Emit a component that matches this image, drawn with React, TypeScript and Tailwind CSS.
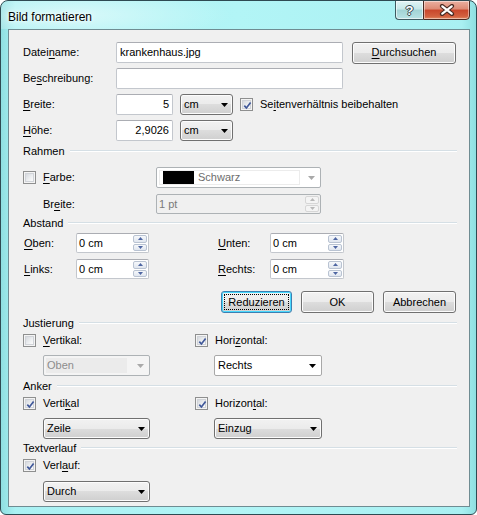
// "Bild formatieren" — Windows 7 style picture format dialog.

import React from 'react'

const sans = "font-['Liberation_Sans',Arial,sans-serif]"

// label with one underlined accelerator letter
function Acc({ t, u }: { t: string; u: number }) {
  return (
    <span className="whitespace-nowrap">
      {t.slice(0, u)}
      <span className="underline underline-offset-[2px] decoration-[1px]">{t[u]}</span>
      {t.slice(u + 1)}
    </span>
  )
}

function Arrow({ color = '#000' }: { color?: string }) {
  return (
    <svg width="7" height="4" viewBox="0 0 7 4" className="shrink-0">
      <path d="M0 0H7L3.5 4Z" fill={color} />
    </svg>
  )
}

function Check({ on }: { on?: boolean }) {
  return (
    <div className="w-[13px] h-[13px] shrink-0 border border-[#8e8f8f] bg-[#f4f4f4] p-[1px]">
      <div className="w-full h-full relative border border-[#d0d3d8] bg-[linear-gradient(135deg,#d6d9de_0%,#eef0f2_60%,#fbfbfb_100%)]">
        {on && (
          <svg width="9" height="9" viewBox="0 0 9 9" className="absolute left-[0px] top-[0px]">
            <path d="M1.3 4.6 L3.4 7 L7.6 1.4" stroke="#41599a" strokeWidth="1.7" fill="none" />
          </svg>
        )}
      </div>
    </div>
  )
}

function TextBox({ w, value = '', right }: { w: number; value?: string; right?: boolean }) {
  return (
    <div
      style={{ width: w }}
      className={
        'h-[21px] shrink-0 rounded-[2px] border border-[#c3c7cd] border-t-[#abadb3] bg-white flex items-center px-[3px] ' +
        (right ? 'justify-end' : '')
      }
    >
      {value}
    </div>
  )
}

function Btn({ w, children, focus }: { w: number; children: React.ReactNode; focus?: boolean }) {
  return (
    <div
      style={{ width: w }}
      className={
        'h-[22px] shrink-0 rounded-[3px] border p-[2px] bg-[linear-gradient(#f2f2f2_0%,#ebebeb_50%,#dddddd_50%,#cfcfcf_100%)] ' +
        (focus
          ? 'border-[#3c7fb1] shadow-[inset_0_0_0_1px_#48d8fd]'
          : 'border-[#707070] shadow-[inset_0_0_0_1px_#fcfcfc]')
      }
    >
      <div
        className={
          'w-full h-full flex items-center justify-center ' +
          (focus ? 'outline-1 outline-dotted outline-black -outline-offset-1' : '')
        }
      >
        {children}
      </div>
    </div>
  )
}

function DropBtn({ w, value }: { w: number; value: string }) {
  return (
    <div
      style={{ width: w }}
      className="h-[21px] shrink-0 rounded-[3px] border border-[#707070] shadow-[inset_0_0_0_1px_#fcfcfc] bg-[linear-gradient(#f2f2f2_0%,#ebebeb_50%,#dddddd_50%,#cfcfcf_100%)] flex items-center pl-[3px] pr-[4px]"
    >
      <span className="flex-1">{value}</span>
      <Arrow />
    </div>
  )
}

function DropWhite({ w, value }: { w: number; value: string }) {
  return (
    <div
      style={{ width: w }}
      className="h-[21px] shrink-0 rounded-[2px] border border-[#a8a8a8] bg-white flex items-center pl-[3px] pr-[5px]"
    >
      <span className="flex-1">{value}</span>
      <Arrow />
    </div>
  )
}

function DropOff({ w, value }: { w: number; value: string }) {
  return (
    <div
      style={{ width: w }}
      className="h-[21px] shrink-0 rounded-[2px] border border-[#adb2b5] bg-[#f4f4f4] flex items-center p-[2px] pr-[5px] text-[#8d8d8d]"
    >
      <span className="flex-1 h-full bg-[#ebebeb] flex items-center pl-[1px] mr-[10px]">{value}</span>
      <Arrow color="#a9a9a9" />
    </div>
  )
}

function SpinBtns({ off }: { off?: boolean }) {
  const c = off ? '#b8b8b8' : '#4e66a2'
  const box = off
    ? 'border-[#d6d6d6] bg-[#f4f4f4]'
    : 'border-[#b9c3d2] bg-[linear-gradient(#f6f8fb,#e0e6ef)]'
  return (
    <div className="w-[15px] h-full flex flex-col gap-[1px] py-[1px] pr-[1px] shrink-0">
      <div className={'flex-1 rounded-[2px] border flex items-center justify-center ' + box}>
        <svg width="5" height="3" viewBox="0 0 5 3">
          <path d="M0 3H5L2.5 0Z" fill={c} />
        </svg>
      </div>
      <div className={'flex-1 rounded-[2px] border flex items-center justify-center ' + box}>
        <svg width="5" height="3" viewBox="0 0 5 3">
          <path d="M0 0H5L2.5 3Z" fill={c} />
        </svg>
      </div>
    </div>
  )
}

function Spinner({ w, value, off }: { w: number; value: string; off?: boolean }) {
  return (
    <div
      style={{ width: w }}
      className={
        'h-[20px] shrink-0 rounded-[2px] border flex items-stretch ' +
        (off ? 'border-[#adb2b5] bg-[#f0f0f0] text-[#7a7a7a]' : 'border-[#c3c7cd] border-t-[#abadb3] bg-white')
      }
    >
      <span className="flex-1 flex items-center pl-[2px]">{value}</span>
      <SpinBtns off={off} />
    </div>
  )
}

function Section({ title, mt }: { title: string; mt: number }) {
  return (
    <div style={{ marginTop: mt }} className="h-[14px] flex items-center gap-[5px]">
      <span>{title}</span>
      <div className="flex-1 h-[2px] border-t border-[#d5dfe5] border-b border-b-white" />
    </div>
  )
}

export default function App() {
  return (
    <div className="w-[477px] h-[515px] rounded-t-[8px] rounded-b-[6px] border border-[#2e4a52] overflow-hidden bg-[linear-gradient(90deg,#8fdfe1_0%,#aaf1f3_3%,#b2f5f6_50%,#a9f0f2_97%,#8fdfe1_100%)]">
      {/* title bar */}
      <div className="h-[28px] flex items-start bg-[radial-gradient(ellipse_160px_30px_at_70px_14px,rgba(255,255,255,0.55),transparent)]">
        <span
          className={`${sans} ml-[7px] mt-[9px] text-[12px] leading-[14px] text-black [text-shadow:0_0_6px_#ffffff,0_0_3px_#ffffff]`}
        >
          Bild formatieren
        </span>
        <div className="ml-auto mr-[6px] -mt-[1px] flex h-[20px]">
          <div className="w-[28px] h-full rounded-bl-[4px] border border-r-0 border-[#3e5a60] bg-[linear-gradient(#e2f4f5_0%,#c6e7e8_45%,#a2d3d5_50%,#b9e3e5_100%)] shadow-[inset_0_0_0_1px_rgba(255,255,255,0.6)] flex items-center justify-center">
            <span
              className={`${sans} font-bold text-[13px] leading-none text-white [text-shadow:1px_0_#33464c,-1px_0_#33464c,0_1px_#33464c,0_-1px_#33464c]`}
            >
              ?
            </span>
          </div>
          <div className="w-[47px] h-full rounded-br-[4px] border border-[#4a2a22] bg-[linear-gradient(#eab0a1_0%,#dd8a74_45%,#c9462b_50%,#d2603f_85%,#e28a62_100%)] shadow-[inset_0_0_0_1px_rgba(255,255,255,0.45)] flex items-center justify-center">
            <svg width="16" height="12" viewBox="0 0 16 12">
              <path d="M3 2 L13 10 M13 2 L3 10" stroke="#4a2a22" strokeWidth="4.2" strokeLinecap="round" />
              <path d="M3.3 2.3 L12.7 9.7 M12.7 2.3 L3.3 9.7" stroke="#ffffff" strokeWidth="2.2" strokeLinecap="round" />
            </svg>
          </div>
        </div>
      </div>

      {/* client area */}
      <div className={`${sans} ml-[7px] w-[462px] h-[478px] border border-[#6f8c92] bg-[#f0f0f0] text-[11px] text-black`}>
        <div className="pl-[14px] pr-[12px] flex flex-col">
          <div className="mt-[12px] h-[21px] flex items-center">
            <div className="w-[93px]"><Acc t="Dateiname:" u={5} /></div>
            <TextBox w={227} value="krankenhaus.jpg" />
            <div className="ml-[9px]">
              <Btn w={104}><Acc t="Durchsuchen" u={0} /></Btn>
            </div>
          </div>
          <div className="mt-[5px] h-[21px] flex items-center">
            <div className="w-[93px]"><Acc t="Beschreibung:" u={2} /></div>
            <TextBox w={227} />
          </div>
          <div className="mt-[5px] h-[21px] flex items-center">
            <div className="w-[93px]"><Acc t="Breite:" u={0} /></div>
            <TextBox w={57} value="5" right />
            <div className="ml-[7px]"><DropBtn w={53} value="cm" /></div>
            <div className="ml-[7px] flex items-center gap-[7px]">
              <Check on />
              <Acc t="Seitenverhältnis beibehalten" u={2} />
            </div>
          </div>
          <div className="mt-[5px] h-[21px] flex items-center">
            <div className="w-[93px]"><Acc t="Höhe:" u={0} /></div>
            <TextBox w={57} value="2,9026" right />
            <div className="ml-[7px]"><DropBtn w={53} value="cm" /></div>
          </div>

          <Section title="Rahmen" mt={3} />
          <div className="mt-[9px] h-[21px] flex items-center">
            <Check />
            <div className="ml-[7px] w-[113px]"><Acc t="Farbe:" u={0} /></div>
            <div className="w-[165px] h-[21px] rounded-[2px] border border-[#adb2b5] bg-white flex items-center p-[2px] pr-[5px]">
              <div className="flex-1 h-full border border-[#ececec] flex items-center pl-[3px] gap-[4px] mr-[8px]">
                <div className="w-[31px] h-[13px] bg-black" />
                <span className="text-[#6d6d6d]">Schwarz</span>
              </div>
              <Arrow color="#a9a9a9" />
            </div>
          </div>
          <div className="mt-[6px] h-[20px] flex items-center pl-[20px]">
            <div className="w-[113px]"><Acc t="Breite:" u={2} /></div>
            <Spinner w={165} value="1 pt" off />
          </div>

          <Section title="Abstand" mt={2} />
          <div className="mt-[3px] h-[20px] flex items-center pl-[1px]">
            <div className="w-[52px]"><Acc t="Oben:" u={0} /></div>
            <Spinner w={73} value="0 cm" />
            <div className="ml-[69px] w-[52px]"><Acc t="Unten:" u={0} /></div>
            <Spinner w={74} value="0 cm" />
          </div>
          <div className="mt-[6px] h-[20px] flex items-center pl-[1px]">
            <div className="w-[52px]"><Acc t="Links:" u={0} /></div>
            <Spinner w={73} value="0 cm" />
            <div className="ml-[69px] w-[52px]"><Acc t="Rechts:" u={0} /></div>
            <Spinner w={74} value="0 cm" />
          </div>
          <div className="mt-[12px] h-[22px] flex items-center justify-end gap-[9px] pr-[1px]">
            <Btn w={71} focus>Reduzieren</Btn>
            <Btn w={73}>OK</Btn>
            <Btn w={73}>Abbrechen</Btn>
          </div>

          <Section title="Justierung" mt={3} />
          <div className="mt-[3px] h-[14px] flex items-center">
            <div className="w-[172px] flex items-center gap-[7px]">
              <Check />
              <Acc t="Vertikal:" u={0} />
            </div>
            <div className="flex items-center gap-[7px]">
              <Check on />
              <Acc t="Horizontal:" u={4} />
            </div>
          </div>
          <div className="mt-[8px] h-[21px] flex items-center pl-[20px]">
            <DropOff w={107} value="Oben" />
            <div className="ml-[64px]"><DropWhite w={108} value="Rechts" /></div>
          </div>

          <Section title="Anker" mt={3} />
          <div className="mt-[3px] h-[14px] flex items-center">
            <div className="w-[172px] flex items-center gap-[7px]">
              <Check on />
              <Acc t="Vertikal" u={5} />
            </div>
            <div className="flex items-center gap-[7px]">
              <Check on />
              <Acc t="Horizontal:" u={7} />
            </div>
          </div>
          <div className="mt-[8px] h-[21px] flex items-center pl-[20px]">
            <DropBtn w={107} value="Zeile" />
            <div className="ml-[64px]"><DropBtn w={108} value="Einzug" /></div>
          </div>

          <Section title="Textverlauf" mt={2} />
          <div className="mt-[3px] h-[14px] flex items-center gap-[7px]">
            <Check on />
            <Acc t="Verlauf:" u={4} />
          </div>
          <div className="mt-[9px] h-[21px] flex items-center pl-[20px]">
            <DropBtn w={107} value="Durch" />
          </div>
        </div>
      </div>
    </div>
  )
}
